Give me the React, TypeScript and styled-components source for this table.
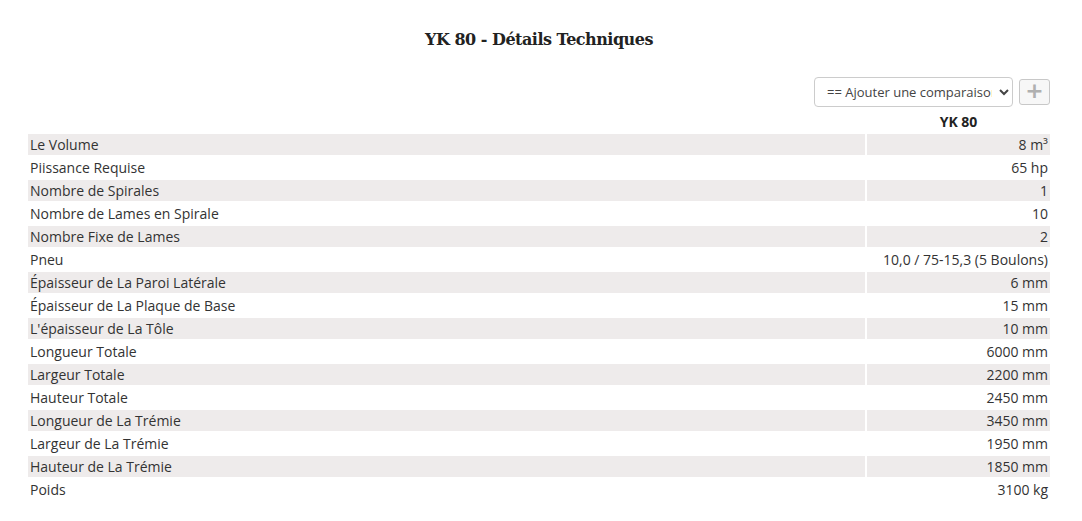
import React from "react";
import styled, { createGlobalStyle } from "styled-components";

const GlobalStyle = createGlobalStyle`
  body {
    margin: 0;
    background: #fff;
    font-family: "Open Sans", "Liberation Sans", sans-serif;
    color: #333;
  }
`;

const StyledPage = styled.div`
  padding: 27px 32px 0 28px;
`;

const StyledTitle = styled.h2`
  margin: 0 0 24px 0;
  text-align: center;
  font-family: "DejaVu Serif", "Liberation Serif", serif;
  font-weight: 700;
  font-size: 16px;
  line-height: 26px;
  color: #222;
  letter-spacing: -0.5px;
`;

const StyledToolbar = styled.div`
  display: flex;
  justify-content: flex-end;
  align-items: center;
  gap: 6px;
  margin-bottom: 2px;
`;

const StyledSelect = styled.select`
  width: 199px;
  height: 30px;
  border: 1px solid #ccc;
  border-radius: 4px;
  background: #fff;
  font-family: "Open Sans", sans-serif;
  font-size: 13px;
  color: #444;
  padding: 0 4px 0 8px;
`;

const StyledAddButton = styled.button`
  width: 31px;
  height: 26px;
  border: 1px solid #c8c8c8;
  border-radius: 3px;
  background: #f7f7f7;
  color: #b0b0b0;
  font-family: "DejaVu Sans", sans-serif;
  font-size: 22px;
  font-weight: 700;
  line-height: 20px;
  padding: 0 0 2px 0;
  display: flex;
  align-items: center;
  justify-content: center;
`;

const StyledTable = styled.table`
  width: calc(100% + 4px);
  margin: 0 -2px;
  border-collapse: separate;
  border-spacing: 2px;
  font-size: 14px;
`;

const StyledHeadCell = styled.th`
  font-weight: 700;
  text-align: center;
  height: 21px;
  padding: 0;
  color: #222;
`;

const StyledRow = styled.tr<{ $striped: boolean }>`
  background: ${props => (props.$striped ? "#eeebeb" : "transparent")};
`;

const StyledLabel = styled.td`
  height: 21px;
  padding: 0 2px;
  line-height: 21px;
  white-space: nowrap;
`;

const StyledValue = styled.td`
  width: 179px;
  height: 21px;
  padding: 0 2px;
  line-height: 21px;
  text-align: right;
  white-space: nowrap;
`;

const specs: [string, string][] = [
  ["Le Volume", "8 m³"],
  ["Piissance Requise", "65 hp"],
  ["Nombre de Spirales", "1"],
  ["Nombre de Lames en Spirale", "10"],
  ["Nombre Fixe de Lames", "2"],
  ["Pneu", "10,0 / 75-15,3 (5 Boulons)"],
  ["Épaisseur de La Paroi Latérale", "6 mm"],
  ["Épaisseur de La Plaque de Base", "15 mm"],
  ["L'épaisseur de La Tôle", "10 mm"],
  ["Longueur Totale", "6000 mm"],
  ["Largeur Totale", "2200 mm"],
  ["Hauteur Totale", "2450 mm"],
  ["Longueur de La Trémie", "3450 mm"],
  ["Largeur de La Trémie", "1950 mm"],
  ["Hauteur de La Trémie", "1850 mm"],
  ["Poids", "3100 kg"],
];

export default function App() {
  return (
    <>
      <GlobalStyle />
      <StyledPage>
        <StyledTitle>YK 80 - Détails Techniques</StyledTitle>
        <StyledToolbar>
          <StyledSelect defaultValue="">
            <option value="">== Ajouter une comparaison ==</option>
          </StyledSelect>
          <StyledAddButton type="button">+</StyledAddButton>
        </StyledToolbar>
        <StyledTable>
          <thead>
            <tr>
              <StyledHeadCell />
              <StyledHeadCell>YK 80</StyledHeadCell>
            </tr>
          </thead>
          <tbody>
            {specs.map(([label, value], i) => (
              <StyledRow key={label} $striped={i % 2 === 0}>
                <StyledLabel>{label}</StyledLabel>
                <StyledValue>{value}</StyledValue>
              </StyledRow>
            ))}
          </tbody>
        </StyledTable>
      </StyledPage>
    </>
  );
}
